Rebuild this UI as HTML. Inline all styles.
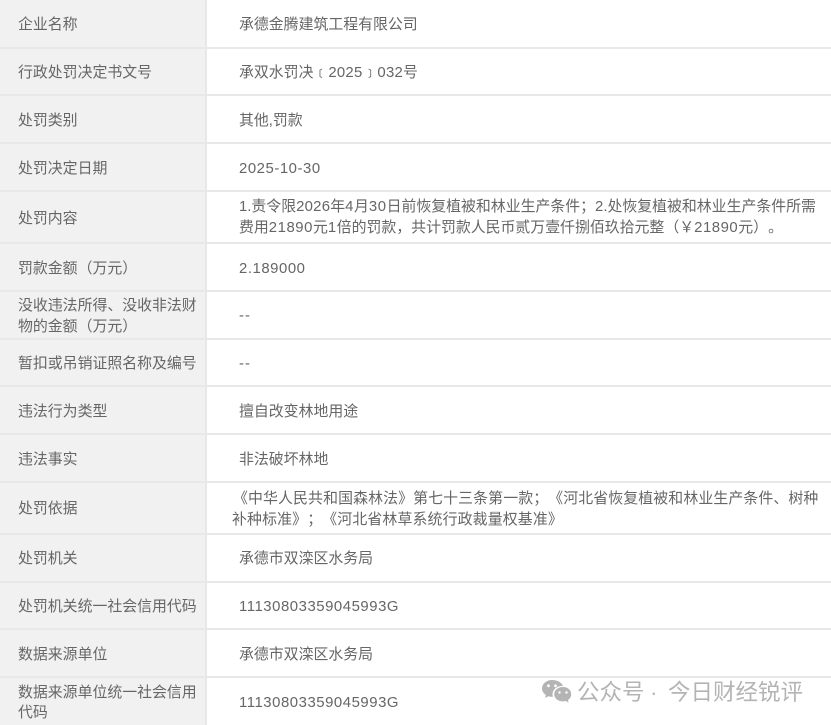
<!DOCTYPE html>
<html lang="zh">
<head>
<meta charset="utf-8">
<style>
html,body{margin:0;padding:0;background:#fff}
body{width:831px;height:725px;position:relative;overflow:hidden;font-family:"Liberation Sans","Noto Sans CJK SC",sans-serif;font-size:14.9px;color:#666;text-spacing-trim:space-all}
#side{position:absolute;left:0;top:0;width:205px;height:725px;background:#f1f1f1}
#vl{position:absolute;left:205px;top:0;width:2px;height:725px;background:#e8e8e8}
.h{position:absolute;left:0;width:831px;height:2px;background:#e8e8e8}
.t{position:absolute;white-space:nowrap;line-height:20px;filter:blur(.3px)}
.l{left:18px}
.v{left:239px}
.n{letter-spacing:.55px}
.m{letter-spacing:.25px}
.w{position:absolute;top:680px;font-size:22.5px;line-height:26px;color:#b4b4b4;white-space:nowrap;filter:blur(.3px)}
</style>
</head>
<body>
<div id="side"></div>
<div id="vl"></div>
<div class="h" style="top:47px"></div>
<div class="h" style="top:94px"></div>
<div class="h" style="top:142px"></div>
<div class="h" style="top:190px"></div>
<div class="h" style="top:242px"></div>
<div class="h" style="top:290px"></div>
<div class="h" style="top:338px"></div>
<div class="h" style="top:385px"></div>
<div class="h" style="top:433px"></div>
<div class="h" style="top:481px"></div>
<div class="h" style="top:533px"></div>
<div class="h" style="top:581px"></div>
<div class="h" style="top:628px"></div>
<div class="h" style="top:676px"></div>

<div class="t l" style="top:15px">企业名称</div>
<div class="t v" style="top:15px">承德金腾建筑工程有限公司</div>
<div class="t l" style="top:63px">行政处罚决定书文号</div>
<div class="t v" style="top:63px">承双水罚决﹝<span class="m">2025</span>﹞<span class="m">032</span>号</div>
<div class="t l" style="top:111px">处罚类别</div>
<div class="t v" style="top:111px">其他,罚款</div>
<div class="t l" style="top:159px">处罚决定日期</div>
<div class="t v n" style="top:159px">2025-10-30</div>
<div class="t l" style="top:209px">处罚内容</div>
<div class="t v" style="top:197px">1.责令限<span class="m">2026</span>年<span class="n">4</span>月<span class="n">30</span>日前恢复植被和林业生产条件；2.处恢复植被和林业生产条件所需</div>
<div class="t v" style="top:218px">费用<span class="n">21890</span>元<span class="n">1</span>倍的罚款，共计罚款人民币贰万壹仟捌佰玖拾元整（￥<span class="n">21890</span>元）。</div>
<div class="t l" style="top:259px">罚款金额（万元）</div>
<div class="t v n" style="top:259px">2.189000</div>
<div class="t l" style="top:296px">没收违法所得、没收非法财</div>
<div class="t l" style="top:317px">物的金额（万元）</div>
<div class="t v" style="top:306px;letter-spacing:1px">--</div>
<div class="t l" style="top:354px">暂扣或吊销证照名称及编号</div>
<div class="t v" style="top:354px;letter-spacing:1px">--</div>
<div class="t l" style="top:402px">违法行为类型</div>
<div class="t v" style="top:402px">擅自改变林地用途</div>
<div class="t l" style="top:450px">违法事实</div>
<div class="t v" style="top:450px">非法破坏林地</div>
<div class="t l" style="top:499px">处罚依据</div>
<div class="t" style="left:233px;top:489px;letter-spacing:.12px">《中华人民共和国森林法》第七十三条第一款；《河北省恢复植被和林业生产条件、树种</div>
<div class="t" style="left:232px;top:510px;letter-spacing:.15px">补种标准》；《河北省林草系统行政裁量权基准》</div>
<div class="t l" style="top:549px">处罚机关</div>
<div class="t v" style="top:549px">承德市双滦区水务局</div>
<div class="t l" style="top:597px">处罚机关统一社会信用代码</div>
<div class="t v n" style="top:597px">11130803359045993G</div>
<div class="t l" style="top:645px">数据来源单位</div>
<div class="t v" style="top:645px">承德市双滦区水务局</div>
<div class="t l" style="top:683px">数据来源单位统一社会信用</div>
<div class="t l" style="top:703px">代码</div>
<div class="t v n" style="top:693px">11130803359045993G</div>

<svg style="position:absolute;left:541px;top:679px" width="32" height="26" viewBox="0 0 32 26">
<path fill="#b4b4b4" d="M11 1C5.500 1 1 4.800 1 9.400c0 2.700 1.500 5 3.900 6.600l-1 3 3.500-1.800c1.200.4 2.400.6 3.600.6h.9c-.3-.9-.4-1.700-.4-2.500 0-4.600 4.300-8.300 9.700-8.300h.8C21.100 3.800 16.500 1 11 1z"/>
<path fill="#b4b4b4" d="M22 8c-4.900 0-8.800 3.200-8.800 7.200s3.900 7.200 8.800 7.200c1 0 2-.1 2.900-.4l2.800 1.700-.8-2.600c2-1.300 3.300-3.500 3.300-5.900C30.200 11.200 26.900 8 22 8z"/>
<circle cx="7.500" cy="6.800" r="1.400" fill="#fff"/><circle cx="14.500" cy="6.800" r="1.400" fill="#fff"/>
<circle cx="18.500" cy="13.500" r="1.200" fill="#fff"/><circle cx="25.500" cy="13.500" r="1.200" fill="#fff"/>
</svg>
<div class="w" style="left:577px">公众号</div>
<div class="w" style="left:650px">·</div>
<div class="w" style="left:668px">今日财经锐评</div>
</body>
</html>
